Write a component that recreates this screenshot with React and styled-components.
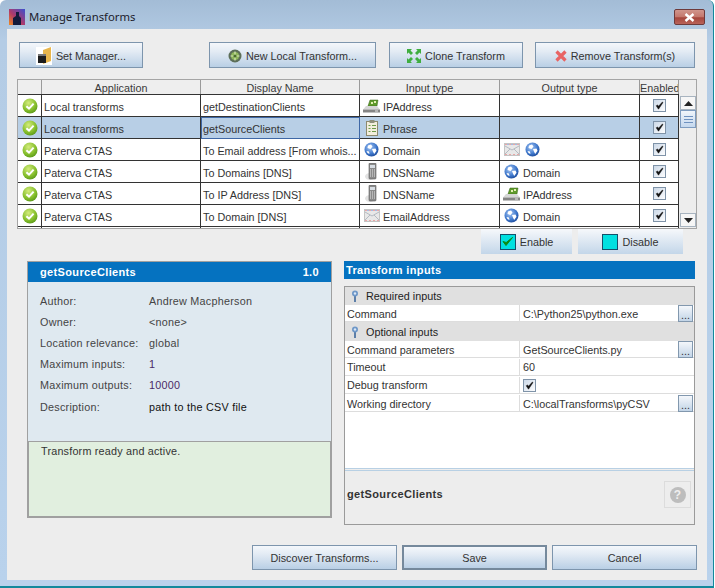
import styled, { createGlobalStyle } from 'styled-components';

const GlobalStyle = createGlobalStyle`
  html, body {
    margin: 0;
    padding: 0;
    background: #fff;
  }
  body {
    font-family: "Liberation Sans", Arial, sans-serif;
    font-size: 10.8px;
    color: #333;
  }
`;

const columns = '24px 159px 159px 140px 140px 39px';

const transforms = [
  { app: 'Local transforms', name: 'getDestinationClients', input: ['ip', 'IPAddress'], output: [] },
  { app: 'Local transforms', name: 'getSourceClients', input: ['phrase', 'Phrase'], output: [], selected: true },
  { app: 'Paterva CTAS', name: 'To Email address [From whois...', input: ['globe', 'Domain'], output: [['mail', ''], ['globe', '']] },
  { app: 'Paterva CTAS', name: 'To Domains [DNS]', input: ['phone', 'DNSName'], output: [['globe', 'Domain']] },
  { app: 'Paterva CTAS', name: 'To IP Address [DNS]', input: ['phone', 'DNSName'], output: [['ip', 'IPAddress']] },
  { app: 'Paterva CTAS', name: 'To Domain [DNS]', input: ['mail', 'EmailAddress'], output: [['globe', 'Domain']] },
];

const details = [
  { label: 'Author:', value: 'Andrew Macpherson' },
  { label: 'Owner:', value: '<none>' },
  { label: 'Location relevance:', value: 'global' },
  { label: 'Maximum inputs:', value: '1', tone: '#4a2a66' },
  { label: 'Maximum outputs:', value: '10000', tone: '#4a2a66' },
  { label: 'Description:', value: 'path to the CSV file', tone: '#111' },
];

function StatusIcon() {
  return (
    <svg width="16" height="16" viewBox="0 0 16 16">
      <defs>
        <radialGradient id="ok" cx="0.4" cy="0.3" r="0.8">
          <stop offset="0" stopColor="#d4ec7c" />
          <stop offset="0.6" stopColor="#86bf2c" />
          <stop offset="1" stopColor="#4f8f14" />
        </radialGradient>
      </defs>
      <circle cx="8" cy="8" r="7.5" fill="url(#ok)" />
      <path d="M4.400 8.200 7 10.600 11.600 5.600" fill="none" stroke="#fff" strokeWidth="2" />
    </svg>
  );
}

function TypeIcon({ kind }) {
  if (kind === 'ip') {
    return (
      <svg width="17" height="14" viewBox="0 0 17 14">
        <path d="M5 7 7 1h8l-1 6z" fill="#5f9a2c" stroke="#38651a" strokeWidth="0.5" />
        <path d="M8 3h2v2H8zM11 2h2v2h-2z" fill="#e4f0b4" />
        <path d="M3 7h11l3 3.500H0z" fill="#d6d6d6" />
        <rect x="0" y="10.500" width="17" height="3" fill="#858585" />
        <rect x="12" y="11.500" width="3" height="1" fill="#e8e8e8" />
      </svg>
    );
  }
  if (kind === 'phrase') {
    return (
      <svg width="14" height="16" viewBox="0 0 14 16">
        <rect x="1.500" y="1.500" width="11" height="14" fill="#f3eedd" stroke="#8d8a6e" />
        <rect x="4.500" y="0" width="5" height="3" fill="#8f8f7c" />
        <path d="M3.500 5.500h2M7 5.500h4M3.500 8.500h2M7 8.500h4M3.500 11.500h2M7 11.500h4" stroke="#6e9a4a" />
      </svg>
    );
  }
  if (kind === 'phone') {
    return (
      <svg width="13" height="17" viewBox="0 0 13 17">
        <ellipse cx="5" cy="13.500" rx="5" ry="3.500" fill="#e2e2e2" />
        <rect x="4" y="0" width="7" height="16" rx="1" fill="#8a8a8a" stroke="#5a5a5a" strokeWidth="0.6" />
        <rect x="5" y="2" width="5" height="3" fill="#d7dde3" />
        <path d="M5 7h5M5 9h5M5 11h5M5 13h5" stroke="#e4e4e4" strokeDasharray="1 1" />
      </svg>
    );
  }
  if (kind === 'mail') {
    return (
      <svg width="16" height="13" viewBox="0 0 16 13">
        <rect x="0.500" y="0.500" width="15" height="12" fill="#e8e8e8" stroke="#c4c4c4" />
        <path d="M1 1.500h14M1 11.500h14" stroke="#e8a8a8" strokeDasharray="2 2" />
        <path d="M3 1.500h12" stroke="#a4bce4" strokeDasharray="2 2" />
        <path d="M1 3l7 4 7-4M1 11l5-5M15 11l-5-5" fill="none" stroke="#b4bac2" />
      </svg>
    );
  }
  return (
    <svg width="15" height="15" viewBox="0 0 15 15">
      <defs>
        <radialGradient id="globe" cx="0.4" cy="0.35" r="0.75">
          <stop offset="0" stopColor="#a8c8f4" />
          <stop offset="0.6" stopColor="#3f78cc" />
          <stop offset="1" stopColor="#143f8e" />
        </radialGradient>
      </defs>
      <circle cx="7.500" cy="7.500" r="7" fill="url(#globe)" />
      <path d="M4 3.500l3-1 1.500 2-2 2.500L3.500 6zM8 7l3.500-.5 1 2.200-2.300 3.300-1.400-2.800zM2.500 9l2.500.5.500 2.500-2-1z" fill="#fff" />
    </svg>
  );
}

function Check() {
  return (
    <CheckBox>
      <svg width="9" height="9" viewBox="0 0 9 9">
        <path d="M1.200 4.800 2.600 3.900 3.500 5.300 7.400 1 8 1.500 3.500 8.200z" fill="#111" stroke="#111" strokeWidth="0.5" />
      </svg>
    </CheckBox>
  );
}

function Pin() {
  return (
    <svg width="8" height="12" viewBox="0 0 8 12">
      <rect x="3" y="5" width="2" height="7" fill="#5d7fa8" />
      <circle cx="4" cy="3.500" r="3" fill="#6f98c8" />
      <circle cx="4" cy="3.500" r="1.200" fill="#dbe8f6" />
    </svg>
  );
}

export default function App() {
  return (
    <>
      <GlobalStyle />
      <Window>
        <TitleBar>
          <TitleLeft>
            <svg width="16" height="16" viewBox="0 0 16 16">
              <defs>
                <linearGradient id="logo" x1="0" y1="1" x2="1" y2="0">
                  <stop offset="0" stopColor="#f08a1c" />
                  <stop offset="0.45" stopColor="#b03a6a" />
                  <stop offset="1" stopColor="#3a4fd0" />
                </linearGradient>
              </defs>
              <rect width="16" height="16" fill="url(#logo)" />
              <path d="M4 16V9l3-2V3h3v4l2 2v7z" fill="#141a3a" />
            </svg>
            <TitleText>Manage Transforms</TitleText>
          </TitleLeft>
          <CloseButton>
            <svg width="11" height="9" viewBox="0 0 11 9">
              <path d="M1.500 1 9.500 8M9.500 1 1.500 8" stroke="#fff" strokeWidth="2.400" />
            </svg>
          </CloseButton>
        </TitleBar>

        <Panel>
          <Toolbar>
            <ToolButton $width={124}>
              <svg width="16" height="18" viewBox="0 0 16 18">
                <rect x="0" y="0" width="16" height="18" fill="#fff" />
                <path d="M7 3l8-3v14l-8 3z" fill="#e8b64c" />
                <rect x="2" y="7" width="8" height="9" fill="#1d1d1d" />
                <rect x="2" y="7" width="8" height="2" fill="#777" />
              </svg>
              Set Manager...
            </ToolButton>
            <ToolGroup>
              <ToolButton $width={167} $trail={1}>
                <svg width="14" height="14" viewBox="0 0 14 14">
                  <circle cx="7" cy="7" r="6.500" fill="#5c6e58" />
                  <circle cx="7" cy="7" r="4" fill="#8fb75a" />
                  <path d="M7 2.500v9M2.500 7h9" stroke="#d5e6b6" strokeWidth="1.200" />
                  <circle cx="7" cy="7" r="1.600" fill="#4a6e2c" />
                </svg>
                New Local Transform...
              </ToolButton>
              <ToolButton $width={134}>
                <svg width="14" height="14" viewBox="0 0 14 14">
                  <path d="M0 0h5L3.500 1.500 6 4 4 6 1.500 3.500 0 5zM14 0v5l-1.500-1.500L10 6 8 4l2.500-2.500L9 0zM0 14V9l1.500 1.500L4 8l2 2-2.500 2.500L5 14zM14 14H9l1.500-1.500L8 10l2-2 2.500 2.500L14 9z" fill="#3fae3f" />
                </svg>
                Clone Transform
              </ToolButton>
              <ToolButton $width={160}>
                <svg width="12" height="12" viewBox="0 0 12 12">
                  <path d="M1.500 1.500 10.500 10.500M10.500 1.500 1.500 10.500" stroke="#e86464" strokeWidth="3.200" />
                </svg>
                Remove Transform(s)
              </ToolButton>
            </ToolGroup>
          </Toolbar>

          <TableFrame>
            <Table>
              <HeaderRow>
                <HeaderCell />
                <HeaderCell>Application</HeaderCell>
                <HeaderCell>Display Name</HeaderCell>
                <HeaderCell>Input type</HeaderCell>
                <HeaderCell>Output type</HeaderCell>
                <HeaderCell>Enabled</HeaderCell>
              </HeaderRow>
              {transforms.map((t) => (
                <Row key={t.name} $selected={t.selected}>
                  <Cell $center><StatusIcon /></Cell>
                  <Cell>{t.app}</Cell>
                  <Cell $focused={t.selected}>{t.name}</Cell>
                  <Cell>
                    <IconSlot><TypeIcon kind={t.input[0]} /></IconSlot>
                    {t.input[1]}
                  </Cell>
                  <Cell>
                    {t.output.map(([kind, label], i) => (
                      <OutputItem key={i}>
                        <IconSlot><TypeIcon kind={kind} /></IconSlot>
                        {label}
                      </OutputItem>
                    ))}
                  </Cell>
                  <Cell $center><Check /></Cell>
                </Row>
              ))}
              <Row>
                <Cell /><Cell /><Cell /><Cell /><Cell /><Cell />
              </Row>
            </Table>
            <ScrollBar>
              <ScrollButton>
                <svg width="9" height="5" viewBox="0 0 9 5"><path d="M4.500 0 9 5H0z" fill="#222" /></svg>
              </ScrollButton>
              <ScrollThumb><ThumbLines /></ScrollThumb>
              <ScrollTrack />
              <ScrollButton>
                <svg width="9" height="5" viewBox="0 0 9 5"><path d="M4.500 5 9 0H0z" fill="#222" /></svg>
              </ScrollButton>
            </ScrollBar>
          </TableFrame>

          <ToggleBar>
            <ToggleButton $width={91}>
              <Swatch>
                <svg width="13" height="11" viewBox="0 0 13 11">
                  <path d="M2 5.500 5 9.500 11.500 1.500 5.200 6.500z" fill="#0d8a12" stroke="#0d8a12" />
                </svg>
              </Swatch>
              Enable
            </ToggleButton>
            <ToggleButton $width={105}>
              <Swatch />
              Disable
            </ToggleButton>
          </ToggleBar>

          <Columns>
            <InfoCard>
              <InfoHeader>
                <span>getSourceClients</span>
                <span>1.0</span>
              </InfoHeader>
              <InfoBody>
                {details.map((d) => (
                  <InfoRow key={d.label}>
                    <InfoLabel>{d.label}</InfoLabel>
                    <InfoValue $tone={d.tone}>{d.value}</InfoValue>
                  </InfoRow>
                ))}
              </InfoBody>
              <StatusBox>Transform ready and active.</StatusBox>
            </InfoCard>

            <InputsColumn>
              <InputsHeader>Transform inputs</InputsHeader>
              <InputsPanel>
                <PropertySheet>
                  <GroupRow $height={18}><Pin />Required inputs</GroupRow>
                  <PropRow $height={17}>
                    <PropName>Command</PropName>
                    <PropValue>C:\Python25\python.exe<DotsButton>...</DotsButton></PropValue>
                  </PropRow>
                  <GroupRow $height={19}><Pin />Optional inputs</GroupRow>
                  <PropRow $height={17}>
                    <PropName>Command parameters</PropName>
                    <PropValue>GetSourceClients.py<DotsButton>...</DotsButton></PropValue>
                  </PropRow>
                  <PropRow $height={18} $nudge>
                    <PropName>Timeout</PropName>
                    <PropValue>60</PropValue>
                  </PropRow>
                  <PropRow $height={18} $nudge>
                    <PropName>Debug transform</PropName>
                    <PropValue><Check /></PropValue>
                  </PropRow>
                  <PropRow $height={18} $nudge>
                    <PropName>Working directory</PropName>
                    <PropValue>C:\localTransforms\pyCSV<DotsButton>...</DotsButton></PropValue>
                  </PropRow>
                </PropertySheet>
                <HelpBar>
                  <HelpName>getSourceClients</HelpName>
                  <HelpBox><HelpDot>?</HelpDot></HelpBox>
                </HelpBar>
              </InputsPanel>
            </InputsColumn>
          </Columns>

          <Footer>
            <FooterButton>Discover Transforms...</FooterButton>
            <FooterButton $primary>Save</FooterButton>
            <FooterButton>Cancel</FooterButton>
          </Footer>
        </Panel>
      </Window>
    </>
  );
}

const Window = styled.div`
  box-sizing: border-box;
  width: 714px;
  height: 588px;
  display: flex;
  flex-direction: column;
  padding: 0 6px 6px 7px;
  background: linear-gradient(#a3bcd6 0, #b4cce5 40px, #b9d2ec 100%);
  border-top-left-radius: 6px;
  border-top-right-radius: 6px;
  border-bottom: 2px solid #12899c;
  border-right: 1px solid #12899c;
`;

const TitleBar = styled.div`
  height: 29px;
  flex: none;
  display: flex;
  align-items: center;
  justify-content: space-between;
  margin-left: 2px;
  padding-right: 2px;
`;

const TitleLeft = styled.div`
  display: flex;
  align-items: center;
  gap: 4px;
  margin-top: 4px;
`;

const TitleText = styled.span`
  font-family: "Noto Sans", sans-serif;
  font-size: 11.3px;
  color: #1c1c2c;
`;

const CloseButton = styled.div`
  box-sizing: border-box;
  width: 31px;
  height: 16px;
  display: flex;
  align-items: center;
  justify-content: center;
  margin-top: 5px;
  border: 1px solid #6e3a3a;
  border-radius: 2px;
  background: linear-gradient(#d0958c 0%, #c4776c 50%, #a5463c 55%, #b9635a 100%);
`;

const Panel = styled.div`
  flex: 1;
  display: flex;
  flex-direction: column;
  background: #ededed;
  padding: 13px 10px 0;
`;

const Toolbar = styled.div`
  box-sizing: border-box;
  display: flex;
  justify-content: space-between;
  padding: 0 2px;
  width: 680px;
`;

const ToolGroup = styled.div`
  display: flex;
  gap: 12px;
`;

const ToolButton = styled.div`
  box-sizing: border-box;
  width: ${(p) => p.$width}px;
  height: 26px;
  margin-right: ${(p) => p.$trail || 0}px;
  padding-top: 1px;
  display: flex;
  align-items: center;
  justify-content: center;
  gap: 4px;
  border: 1px solid #7d95ad;
  background: linear-gradient(#f4f7fb 0%, #e3ebf4 35%, #b9cfe5 100%);
`;

const TableFrame = styled.div`
  box-sizing: border-box;
  width: 680px;
  height: 150px;
  margin-top: 11px;
  display: flex;
  border: 1px solid #a5a5a5;
  background: #ededed;
`;

const Table = styled.div`
  width: 661px;
  height: 148px;
  overflow: hidden;
`;

const HeaderRow = styled.div`
  display: grid;
  grid-template-columns: ${columns};
  height: 14px;
  border-bottom: 1px solid #333;
`;

const HeaderCell = styled.div`
  box-sizing: border-box;
  border-right: 1px solid #9a9a9a;
  background: #eee;
  text-align: center;
  line-height: 16px;
  color: #3a3a3a;
  white-space: nowrap;
  overflow: hidden;
`;

const Row = styled.div`
  display: grid;
  grid-template-columns: ${columns};
  height: 22px;
  background: ${(p) => (p.$selected ? '#b8cfe6' : '#fff')};
`;

const Cell = styled.div`
  box-sizing: border-box;
  display: flex;
  align-items: center;
  justify-content: ${(p) => (p.$center ? 'center' : 'flex-start')};
  padding-left: ${(p) => (p.$center ? 0 : 2)}px;
  padding-top: ${(p) => (p.$center ? 0 : 2)}px;
  border-right: 1px solid #333;
  border-bottom: 1px solid #333;
  white-space: nowrap;
  ${(p) => p.$focused && 'outline: 1px solid #3f68a6; outline-offset: -1px;'}
`;

const IconSlot = styled.span`
  width: 17px;
  height: 17px;
  display: inline-flex;
  align-items: center;
  justify-content: center;
  margin: -2px 3px 0 1px;
`;

const OutputItem = styled.span`
  display: inline-flex;
  align-items: center;
`;

const CheckBox = styled.span`
  box-sizing: border-box;
  width: 13px;
  height: 13px;
  display: inline-flex;
  align-items: center;
  justify-content: center;
  border: 1px solid #7f93a8;
  background: linear-gradient(135deg, #ccd9e8, #fdfdfe);
`;

const ScrollBar = styled.div`
  width: 16px;
  display: flex;
  flex-direction: column;
  padding-top: 16px;
  padding-bottom: 1px;
  margin-left: 1px;
`;

const ScrollButton = styled.div`
  box-sizing: border-box;
  height: 14px;
  flex: none;
  display: flex;
  align-items: center;
  justify-content: center;
  border: 1px solid #a8b4c0;
  background: #f6f6f6;
`;

const ScrollThumb = styled.div`
  box-sizing: border-box;
  height: 18px;
  flex: none;
  display: flex;
  align-items: center;
  justify-content: center;
  border: 1px solid #7e9cc0;
  background: linear-gradient(#f0f5fb, #c5d8ee);
`;

const ThumbLines = styled.span`
  width: 9px;
  height: 5px;
  border-top: 1px solid #6f92c0;
  border-bottom: 1px solid #6f92c0;
  background: linear-gradient(transparent 40%, #6f92c0 40%, #6f92c0 60%, transparent 60%);
`;

const ScrollTrack = styled.div`
  flex: 1;
`;

const ToggleBar = styled.div`
  display: flex;
  gap: 6px;
  height: 25px;
  padding-left: 464px;
`;

const ToggleButton = styled.div`
  box-sizing: border-box;
  width: ${(p) => p.$width}px;
  display: flex;
  align-items: center;
  justify-content: center;
  gap: 4px;
  background: linear-gradient(#f6f8fb, #c3d6e9);
`;

const Swatch = styled.span`
  box-sizing: border-box;
  width: 16px;
  height: 16px;
  display: inline-flex;
  align-items: center;
  justify-content: center;
  background: #00e0e0;
  border: 1px solid #14506a;
`;

const Columns = styled.div`
  display: flex;
  align-items: flex-start;
  gap: 12px;
  margin-top: 7px;
  padding-left: 10px;
`;

const InfoCard = styled.div`
  box-sizing: border-box;
  width: 305px;
  height: 257px;
  display: flex;
  flex-direction: column;
  border: 1px solid #a0a0a0;
  border-bottom-width: 2px;
  background: #dfe9f0;
`;

const InfoHeader = styled.div`
  height: 20px;
  flex: none;
  display: flex;
  align-items: center;
  justify-content: space-between;
  padding: 0 12px;
  background: #0572c0;
  color: #fff;
  font-weight: bold;
  font-size: 11px;
  letter-spacing: 0.35px;
`;

const InfoBody = styled.div`
  flex: 1;
  padding: 8px 12px 0;
`;

const InfoRow = styled.div`
  height: 21px;
  display: flex;
  align-items: center;
  letter-spacing: 0.25px;

  &:last-child {
    margin-top: 1px;
  }
`;

const InfoLabel = styled.span`
  width: 109px;
  color: #444;
`;

const InfoValue = styled.span`
  color: ${(p) => p.$tone || '#444'};
`;

const StatusBox = styled.div`
  box-sizing: border-box;
  height: 75px;
  flex: none;
  padding: 3px 12px;
  border-top: 1px solid #a0a0a0;
  border-left: 1px solid #a0a0a0;
  border-right: 1px solid #a0a0a0;
  background: #e1efdf;
  color: #333;
  letter-spacing: 0.2px;
`;

const InputsColumn = styled.div`
  width: 351px;
  display: flex;
  flex-direction: column;
  gap: 7px;
`;

const InputsHeader = styled.div`
  height: 18px;
  display: flex;
  align-items: center;
  padding-left: 2px;
  background: #0572c0;
  color: #fff;
  font-size: 11px;
  font-weight: bold;
  letter-spacing: 0.35px;
`;

const InputsPanel = styled.div`
  box-sizing: border-box;
  height: 239px;
  display: flex;
  flex-direction: column;
  border: 1px solid #9a9a9a;
  background: #ededed;
`;

const PropertySheet = styled.div`
  height: 181px;
  flex: none;
  background: #fff;
  border-bottom: 1px solid #b8d0e4;
`;

const GroupRow = styled.div`
  height: ${(p) => p.$height}px;
  display: flex;
  align-items: center;
  gap: 7px;
  padding-left: 6px;
  background: #e0e0e0;
  color: #222;
`;

const PropRow = styled.div`
  box-sizing: border-box;
  height: ${(p) => p.$height}px;
  display: grid;
  grid-template-columns: 175px 1fr;
  border-bottom: 1px solid #ddd;
  ${(p) => p.$nudge && 'padding-top: 1px;'}
`;

const PropName = styled.div`
  display: flex;
  align-items: center;
  padding-left: 2px;
  border-right: 1px solid #ddd;
`;

const PropValue = styled.div`
  display: flex;
  align-items: center;
  justify-content: space-between;
  padding-left: 3px;
  padding-right: 1px;
`;

const DotsButton = styled.span`
  box-sizing: border-box;
  width: 15px;
  height: 17px;
  display: flex;
  align-items: flex-end;
  justify-content: center;
  padding-bottom: 1px;
  line-height: 9px;
  border: 1px solid #8298ae;
  background: linear-gradient(#f4f7fb, #c2d4e7);
`;

const HelpBar = styled.div`
  flex: 1;
  display: flex;
  align-items: flex-start;
  justify-content: space-between;
  padding: 10px 3px 0 2px;
  margin-top: 1px;
  border-top: 1px solid #b8d0e4;
`;

const HelpName = styled.span`
  margin-top: 7px;
  font-size: 11px;
  font-weight: bold;
  color: #333;
  letter-spacing: 0.35px;
`;

const HelpBox = styled.div`
  box-sizing: border-box;
  width: 27px;
  height: 27px;
  display: flex;
  align-items: center;
  justify-content: center;
  border: 1px solid #dcdcdc;
`;

const HelpDot = styled.span`
  width: 16px;
  height: 16px;
  border-radius: 50%;
  background: #bdbdbd;
  color: #efefef;
  font-weight: bold;
  font-size: 12px;
  line-height: 16px;
  text-align: center;
`;

const Footer = styled.div`
  display: flex;
  justify-content: flex-end;
  gap: 5px;
  width: 680px;
  margin-top: 20px;
`;

const FooterButton = styled.div`
  box-sizing: border-box;
  width: 145px;
  height: 25px;
  display: flex;
  align-items: center;
  justify-content: center;
  border: ${(p) => (p.$primary ? '2px solid #75899c' : '1px solid #7d95ad')};
  background: linear-gradient(#f4f7fb 0%, #e3ebf4 35%, #b9cfe5 100%);
`;
